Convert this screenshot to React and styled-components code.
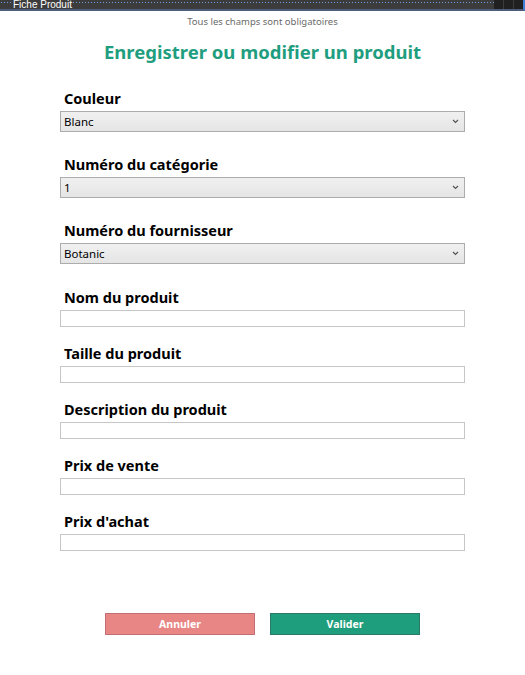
import styled, { createGlobalStyle } from "styled-components";

const GlobalStyle = createGlobalStyle`
  html, body {
    margin: 0;
    padding: 0;
    background: #ffffff;
  }
  body {
    font-family: "Noto Sans", "Open Sans", sans-serif;
  }
`;

const selects = [
  { label: "Couleur", value: "Blanc" },
  { label: "Numéro du catégorie", value: "1" },
  { label: "Numéro du fournisseur", value: "Botanic" },
];

const inputs = [
  "Nom du produit",
  "Taille du produit",
  "Description du produit",
  "Prix de vente",
  "Prix d'achat",
];

const Chevron = () => (
  <svg width="7" height="5" viewBox="0 0 7 5">
    <path d="M1 1 L3.5 3.5 L6 1" fill="none" stroke="#555" strokeWidth="1.2" />
  </svg>
);

const App = () => {
  return (
    <Window>
      <GlobalStyle />
      <TitleBar>
        <span className="caption">Fiche Produit</span>
        <div className="controls">
          <span />
          <span />
          <span />
        </div>
      </TitleBar>
      <Content>
        <Hint>Tous les champs sont obligatoires</Hint>
        <Heading>Enregistrer ou modifier un produit</Heading>
        <Form>
          {selects.map((s) => (
            <Field key={s.label} $gap={22}>
              <Label>{s.label}</Label>
              <Select>
                <span>{s.value}</span>
                <Chevron />
              </Select>
            </Field>
          ))}
          <Spacer />
          {inputs.map((name) => (
            <Field key={name} $gap={16}>
              <Label>{name}</Label>
              <Input type="text" />
            </Field>
          ))}
        </Form>
        <Actions>
          <Button $bg="#e88686" $border="#c26f74">
            Annuler
          </Button>
          <Button $bg="#1e9e7c" $border="#2a7a6a">
            Valider
          </Button>
        </Actions>
      </Content>
    </Window>
  );
};

const Window = styled.div`
  width: 525px;
  height: 675px;
  background: #ffffff;
  display: flex;
  flex-direction: column;
`;

const TitleBar = styled.div`
  height: 9px;
  border-bottom: 2px solid #4d5c7a;
  border-right: 2px solid #3f7fd8;
  background-color: #3c3c3c;
  background-image: radial-gradient(circle, #6f9cdf 0.6px, transparent 0.8px);
  background-size: 3px 3px;
  background-position: 0 1px;
  background-repeat: repeat-x;
  display: flex;
  align-items: flex-start;
  justify-content: space-between;
  overflow: hidden;
  .caption {
    margin-left: 12px;
    margin-top: -1px;
    font-family: "Liberation Sans", sans-serif;
    font-size: 10px;
    line-height: 11px;
    color: #ffffff;
    background: #3c3c3c;
    padding: 0 1px;
  }
  .controls {
    display: flex;
    gap: 1px;
    height: 9px;
    span {
      width: 9px;
      height: 9px;
      background: #202020;
    }
  }
`;

const Content = styled.div`
  display: flex;
  flex-direction: column;
  align-items: center;
`;

const Hint = styled.div`
  margin-top: 4px;
  font-size: 9.5px;
  line-height: 14px;
  color: #6a6a6a;
`;

const Heading = styled.h1`
  margin: 10px 0 0;
  font-size: 18.5px;
  line-height: 26px;
  font-weight: 700;
  color: #1f9e7f;
`;

const Form = styled.div`
  width: 405px;
  margin-top: 23px;
  display: flex;
  flex-direction: column;
`;

const Field = styled.div`
  display: flex;
  flex-direction: column;
  gap: 3px;
  margin-bottom: ${(p) => p.$gap}px;
`;

const Spacer = styled.div`
  margin-top: 1px;
`;

const Label = styled.label`
  padding-left: 4px;
  font-size: 14.5px;
  line-height: 20px;
  font-weight: 700;
  color: #000000;
`;

const Select = styled.div`
  height: 19px;
  box-sizing: content-box;
  border: 1px solid #acacac;
  background: linear-gradient(#f0f0f0, #e5e5e5);
  display: flex;
  align-items: center;
  justify-content: space-between;
  padding: 0 5px 0 3px;
  font-size: 11.5px;
  color: #000000;
`;

const Input = styled.input`
  box-sizing: border-box;
  width: 405px;
  height: 17px;
  margin: 0;
  padding: 0 3px;
  border: 1px solid #c6c6c6;
  background: #ffffff;
  outline: none;
`;

const Actions = styled.div`
  margin-top: 46px;
  display: flex;
  gap: 15px;
`;

const Button = styled.button`
  width: 150px;
  height: 22px;
  box-sizing: border-box;
  border: 1px solid ${(p) => p.$border};
  background: ${(p) => p.$bg};
  color: #ffffff;
  font-family: "Noto Sans", sans-serif;
  font-size: 10.5px;
  font-weight: 700;
  padding: 0;
`;

export default App;
